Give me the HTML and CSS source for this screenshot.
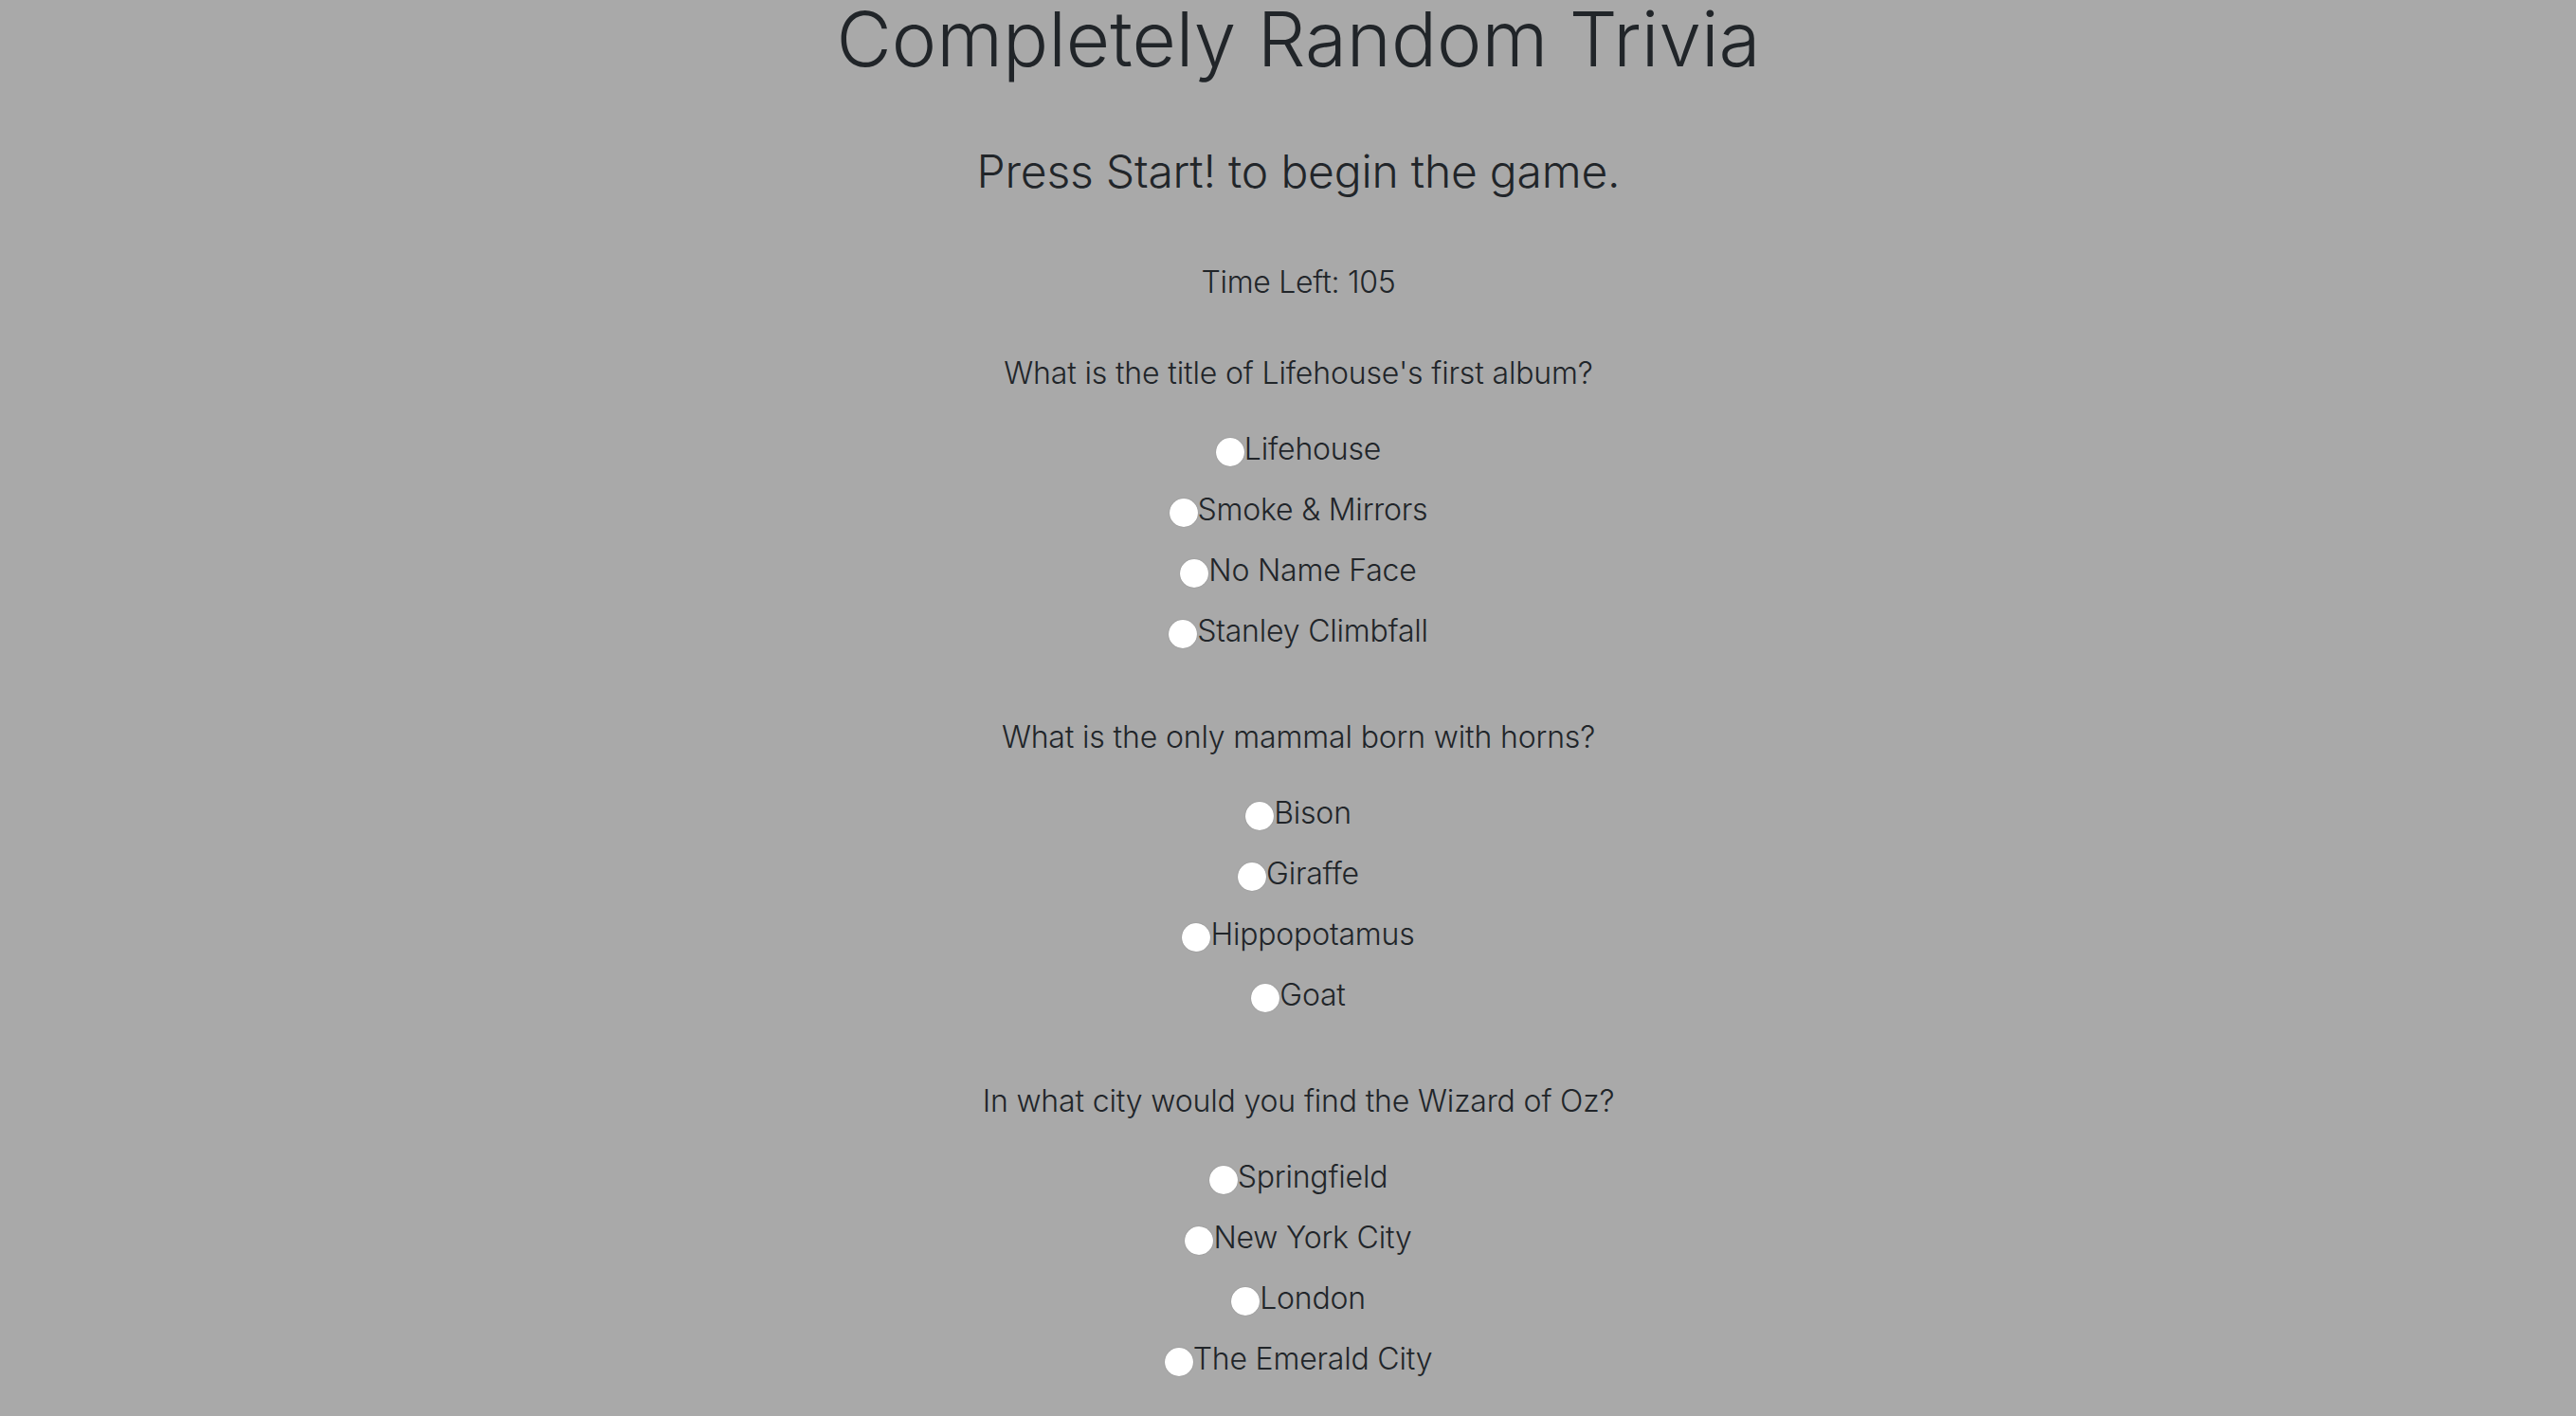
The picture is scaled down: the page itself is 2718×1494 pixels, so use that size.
FILE: index.html
```html
<!DOCTYPE html>
<html lang="en">
<head>
<meta charset="utf-8">
<title>Completely Random Trivia</title>
<link rel="stylesheet" href="styles.css">
</head>
<body>
<main class="page">
  <h1 class="title">Completely Random Trivia</h1>
  <h4 class="subtitle">Press Start! to begin the game.</h4>
  <p class="timer">Time Left: 105</p>
  <form class="quiz">
    <section class="question">
      <p class="q-text">What is the title of Lifehouse's first album?</p>
      <div class="options">
        <label class="option"><input class="radio" type="radio" name="q1"><span>Lifehouse</span></label>
        <label class="option"><input class="radio" type="radio" name="q1"><span>Smoke &amp; Mirrors</span></label>
        <label class="option"><input class="radio" type="radio" name="q1"><span>No Name Face</span></label>
        <label class="option"><input class="radio" type="radio" name="q1"><span>Stanley Climbfall</span></label>
      </div>
    </section>
    <section class="question">
      <p class="q-text">What is the only mammal born with horns?</p>
      <div class="options">
        <label class="option"><input class="radio" type="radio" name="q2"><span>Bison</span></label>
        <label class="option"><input class="radio" type="radio" name="q2"><span>Giraffe</span></label>
        <label class="option"><input class="radio" type="radio" name="q2"><span>Hippopotamus</span></label>
        <label class="option"><input class="radio" type="radio" name="q2"><span>Goat</span></label>
      </div>
    </section>
    <section class="question">
      <p class="q-text">In what city would you find the Wizard of Oz?</p>
      <div class="options">
        <label class="option"><input class="radio" type="radio" name="q3"><span>Springfield</span></label>
        <label class="option"><input class="radio" type="radio" name="q3"><span>New York City</span></label>
        <label class="option"><input class="radio" type="radio" name="q3"><span>London</span></label>
        <label class="option"><input class="radio" type="radio" name="q3"><span>The Emerald City</span></label>
      </div>
    </section>
  </form>
</main>
</body>
</html>
```

FILE: styles.css
```css
html, body {
  margin: 0;
  padding: 0;
}

body {
  background: #a9a9a9;
  color: #212529;
  font-family: "Inter", "Noto Sans", sans-serif;
  font-weight: 300;
  font-size: 32px;
  line-height: 48px;
}

.page {
  display: flex;
  flex-direction: column;
  align-items: center;
  padding-left: 22px;
  text-align: center;
}

.title {
  margin: 0;
  font-size: 80px;
  line-height: 82px;
  font-weight: 300;
}

.subtitle {
  margin: 70px 0 0;
  font-size: 48px;
  line-height: 58px;
  font-weight: 300;
  letter-spacing: -0.2px;
}

.timer {
  margin: 64px 0 0;
  letter-spacing: -0.3px;
}

.quiz {
  margin-top: 48px;
  display: flex;
  flex-direction: column;
  align-items: center;
  gap: 64px;
}

.question {
  display: flex;
  flex-direction: column;
  align-items: center;
}

.q-text {
  margin: 0;
  letter-spacing: -0.15px;
}

.options {
  margin-top: 32px;
  display: flex;
  flex-direction: column;
  align-items: center;
  gap: 16px;
}

.option {
  display: flex;
  align-items: flex-start;
  height: 48px;
  letter-spacing: -0.2px;
  cursor: pointer;
}

.radio {
  appearance: none;
  -webkit-appearance: none;
  width: 30px;
  height: 30px;
  margin: 12px 0 0;
  border-radius: 50%;
  background: #ffffff;
  box-shadow: 0 0 1px 0 rgba(0, 0, 0, 0.35);
  flex: none;
}
```
